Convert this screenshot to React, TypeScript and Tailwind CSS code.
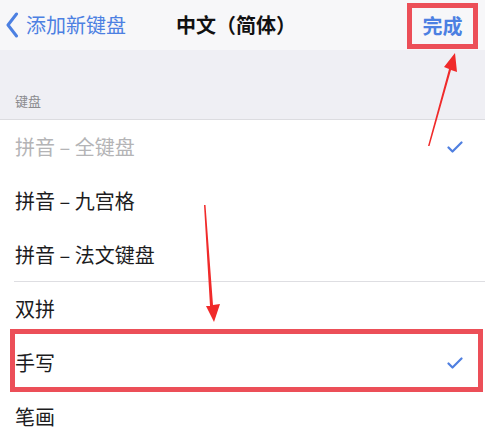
import React from "react";

const Check = () => (
  <svg width="16" height="12" viewBox="0 0 16 12" className="ml-auto mr-[22px]">
    <polyline points="1.5,6.5 5.5,10.5 14.5,1.5" fill="none" stroke="#4f7fe0" strokeWidth="2.2" strokeLinecap="round" strokeLinejoin="round" />
  </svg>
);

const Row = ({ label, grey, check, sep }: { label: string; grey?: boolean; check?: boolean; sep?: boolean }) => (
  <div className={`h-[54px] flex items-center bg-white ml-[14px] pl-px ${sep ? "border-b border-[#dedee2]" : ""}`}>
    <span className={`text-[20px] ${grey ? "text-[#b4b4b6]" : "text-[#1c1c1e]"}`}>{label}</span>
    {check && <Check />}
  </div>
);

export default function App() {
  return (
    <div
      className="relative w-[485px] h-[440px] overflow-hidden bg-white"
      style={{ fontFamily: '"Noto Sans CJK SC", "Noto Sans", sans-serif' }}
    >
      <div className="h-[50px] bg-[#f7f7f9] flex items-center">
        <div className="flex items-center pl-[5px]">
          <svg width="14" height="26" viewBox="0 0 14 26">
            <polyline points="11.5,2 3,13 11.5,24" fill="none" stroke="#4c80e2" strokeWidth="3" strokeLinecap="round" strokeLinejoin="round" />
          </svg>
          <span className="ml-[7px] text-[20px] text-[#4c80e2]">添加新键盘</span>
        </div>
        <div className="ml-[50px] text-[20px] font-semibold text-[#111]">中文（简体）</div>
        <div className="ml-auto mr-[7px] self-start mt-[3px] w-[71px] h-[46px] border-[5px] border-[#ec4f58] flex items-center justify-center">
          <span className="text-[20px] font-semibold text-[#4c80e2]">完成</span>
        </div>
      </div>
      <div className="h-[70px] bg-[#efeff4] border-b border-[#dcdce0] flex items-end pl-[15px] pb-[9px]">
        <span className="text-[13px] text-[#8a8a8e]">键盘</span>
      </div>
      <Row label="拼音 – 全键盘" grey check />
      <Row label="拼音 – 九宫格" />
      <Row label="拼音 – 法文键盘" sep />
      <Row label="双拼" />
      <Row label="手写" check />
      <Row label="笔画" />
      <div className="absolute left-[10px] top-[329px] w-[473px] h-[63px] border-[5px] border-[#ec4f58]" />
      <svg className="absolute left-0 top-0 pointer-events-none" width="485" height="440" viewBox="0 0 485 440">
        <polygon points="428,146 429.5,146 451,70 457,72 455,53 444,67 449,69" fill="#f02a2a" />
        <polygon points="204,205 205.5,205 213,305 220,304 214,322 206,306 210,306" fill="#f02a2a" />
      </svg>
    </div>
  );
}
